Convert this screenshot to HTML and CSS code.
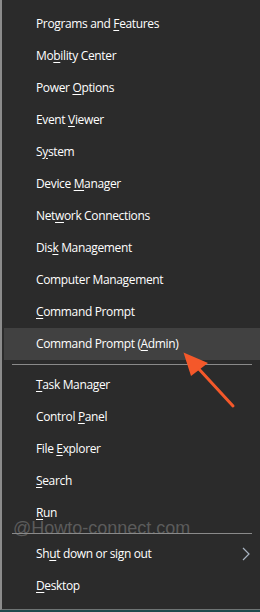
FILE: index.html
```html
<!DOCTYPE html>
<html lang="en">
<head>
    <meta charset="UTF-8">
    <meta name="viewport" content="width=device-width, initial-scale=1.0">
    <title>Quick Link Menu</title>
    <link rel="stylesheet" href="styles.css">
</head>
<body>
    <div class="menu">
        <div class="item">Programs and <u>F</u>eatures</div>
        <div class="item">Mo<u>b</u>ility Center</div>
        <div class="item">Power <u>O</u>ptions</div>
        <div class="item">Event <u>V</u>iewer</div>
        <div class="item">S<u>y</u>stem</div>
        <div class="item">Device <u>M</u>anager</div>
        <div class="item">Net<u>w</u>ork Connections</div>
        <div class="item">Dis<u>k</u> Management</div>
        <div class="item">Computer Mana<u>g</u>ement</div>
        <div class="item"><u>C</u>ommand Prompt</div>
        <div class="item active">Command Prompt (<u>A</u>dmin)</div>
        <div class="sep"></div>
        <div class="item"><u>T</u>ask Manager</div>
        <div class="item">Control <u>P</u>anel</div>
        <div class="item">File <u>E</u>xplorer</div>
        <div class="item"><u>S</u>earch</div>
        <div class="item"><u>R</u>un</div>
        <div class="sep"></div>
        <div class="item submenu">
            <span>Sh<u>u</u>t down or sign out</span>
            <svg class="chevron" width="8" height="14" viewBox="0 0 8 14">
                <path d="M1 1 L7 7 L1 13" fill="none" stroke="#a9b4c2" stroke-width="1.2"/>
            </svg>
        </div>
        <div class="item"><u>D</u>esktop</div>

        <!-- водяной знак и стрелка поверх меню -->
        <div class="watermark">@Howto-connect.com</div>
        <svg class="arrow" width="260" height="612" viewBox="0 0 260 612">
            <line x1="233" y1="406" x2="198" y2="368" stroke="#f4582a" stroke-width="3" stroke-linecap="round"/>
            <polygon points="183.5,352.5 191,376 208,363" fill="#f4582a"/>
        </svg>
    </div>
</body>
</html>
```

FILE: styles.css
```css
body {
    margin: 0;
    padding: 0;
    background-color: #1f4a4d;
    font-family: "Open Sans", "Noto Sans", sans-serif;
}
.menu {
    position: relative;
    width: 258px;
    height: 601px;
    padding-top: 8px;
    background-color: #2b2b2b;
    border-left: 2px solid #8c8c8c;
    border-bottom: 1px solid #6f7474;
}
.item {
    height: 32px;
    line-height: 32px;
    padding-left: 34px;
    font-size: 12px;
    letter-spacing: -0.35px;
    color: #ffffff;
    white-space: nowrap;
}
.item u {
    text-underline-offset: 2px;
}
.item.active {
    margin-left: 2px;
    padding-left: 32px;
    background-color: #414141;
}
.sep {
    height: 9px;
    display: flex;
    align-items: center;
    padding: 0 8px 0 10px;
}
.sep::before {
    content: "";
    flex: 1;
    height: 1px;
    background-color: #8a8a8a;
}
.submenu {
    display: flex;
    align-items: center;
    justify-content: space-between;
    padding-right: 10px;
}
.watermark {
    position: absolute;
    left: 11px;
    top: 518px;
    font-family: "Liberation Sans", Arial, sans-serif;
    font-size: 18px;
    line-height: 20px;
    color: rgba(140, 140, 140, 0.5);
    pointer-events: none;
}
.arrow {
    position: absolute;
    left: -2px;
    top: 0;
    pointer-events: none;
}
```
